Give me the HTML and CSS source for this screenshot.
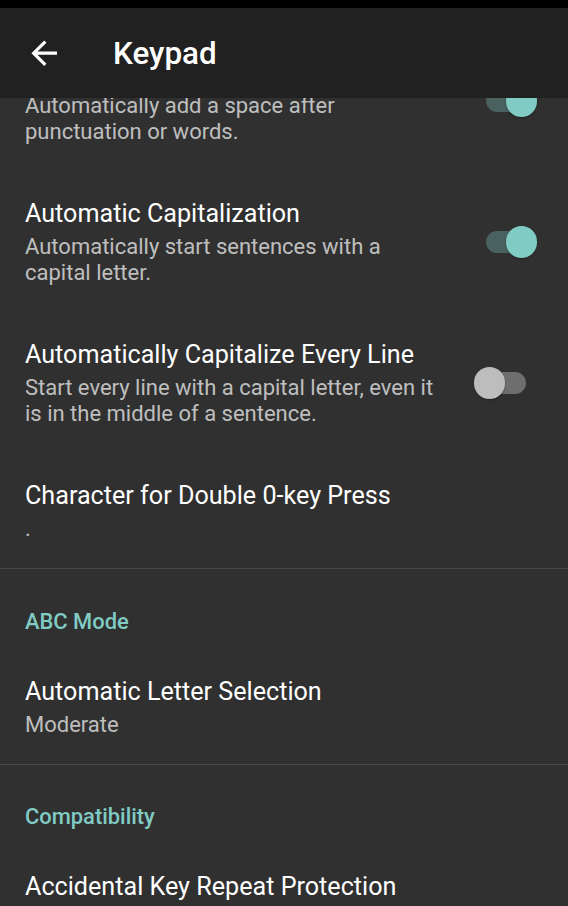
FILE: index.html
```html
<!DOCTYPE html>
<html lang="en">
<head>
  <meta charset="UTF-8">
  <meta name="viewport" content="width=device-width, initial-scale=1.0">
  <title>Keypad</title>
  <link rel="stylesheet" href="styles.css">
</head>
<body>
  <div class="statusbar"></div>

  <div class="appbar">
    <button class="back" aria-label="Back">
      <svg viewBox="0 0 24 24" width="38.4" height="38.4">
        <path fill="#fff" d="M20 11H7.83l5.59-5.59L12 4l-8 8 8 8 1.41-1.41L7.83 13H20v-2z"/>
      </svg>
    </button>
    <h1 class="appbar-title">Keypad</h1>
  </div>

  <div class="list">
    <!-- scrolled down a bit, first item is partly under the toolbar -->
    <div class="list-inner">
      <div class="pref">
        <div class="pref-text">
          <div class="pref-title">Automatic Space</div>
          <div class="pref-summary">Automatically add a space after<br>punctuation or words.</div>
        </div>
        <div class="switch on"><div class="track"></div><div class="thumb"></div></div>
      </div>

      <div class="pref">
        <div class="pref-text">
          <div class="pref-title">Automatic Capitalization</div>
          <div class="pref-summary">Automatically start sentences with a<br>capital letter.</div>
        </div>
        <div class="switch on"><div class="track"></div><div class="thumb"></div></div>
      </div>

      <div class="pref">
        <div class="pref-text">
          <div class="pref-title">Automatically Capitalize Every Line</div>
          <div class="pref-summary">Start every line with a capital letter, even it<br>is in the middle of a sentence.</div>
        </div>
        <div class="switch"><div class="track"></div><div class="thumb"></div></div>
      </div>

      <div class="pref">
        <div class="pref-text">
          <div class="pref-title">Character for Double 0-key Press</div>
          <div class="pref-summary">.</div>
        </div>
      </div>

      <div class="divider"></div>
      <div class="category">ABC Mode</div>

      <div class="pref">
        <div class="pref-text">
          <div class="pref-title">Automatic Letter Selection</div>
          <div class="pref-summary">Moderate</div>
        </div>
      </div>

      <div class="divider"></div>
      <div class="category">Compatibility</div>

      <div class="pref">
        <div class="pref-text">
          <div class="pref-title">Accidental Key Repeat Protection</div>
        </div>
      </div>
    </div>
  </div>
</body>
</html>
```

FILE: styles.css
```css
body {
  margin: 0;
  height: 906px;
  overflow: hidden;
  display: flex;
  flex-direction: column;
  background: #303030;
  font-family: Roboto, "Noto Sans", sans-serif;
  color: #fff;
}

.statusbar {
  height: 8px;
  flex-shrink: 0;
  background: #000;
}

.appbar {
  height: 89.6px;
  flex-shrink: 0;
  background: #212121;
  display: flex;
  align-items: center;
}

.back {
  background: none;
  border: none;
  padding: 0 0 0 24.6px;
  display: flex;
  cursor: pointer;
}

.appbar-title {
  margin: 0 0 0 50px;
  font-size: 31.4px;
  font-weight: 500;
  line-height: 37px;
  padding-top: 2px;
}

.list {
  flex: 1;
  overflow: hidden;
}

.list-inner {
  margin-top: -68.1px;
}

.pref {
  display: flex;
  align-items: center;
  padding: 28.6px 31px 26.4px 25px;
}

.pref-text {
  flex: 1;
  min-width: 0;
}

.pref-title {
  font-size: 25.15px;
  line-height: 30px;
  white-space: nowrap;
}

.pref-summary {
  margin-top: 5px;
  font-size: 22px;
  line-height: 25.5px;
  color: rgba(255, 255, 255, 0.7);
}

.switch {
  position: relative;
  width: 63px;
  height: 31.4px;
  margin-left: 24px;
  flex-shrink: 0;
}

.track {
  margin: 4.6px 11.5px 0;
  height: 22.2px;
  border-radius: 11.1px;
  background: rgba(255, 255, 255, 0.3);
}

.thumb {
  position: absolute;
  top: 0;
  left: 0;
  width: 31.4px;
  height: 31.4px;
  border-radius: 50%;
  background: #bdbdbd;
  box-shadow: 0 1px 2px rgba(0, 0, 0, 0.35);
}

.switch.on .track {
  background: rgba(128, 203, 196, 0.32);
}

.switch.on .thumb {
  left: auto;
  right: 0;
  background: #80cbc4;
}

.divider {
  height: 1px;
  background: #474747;
}

.category {
  padding: 39.6px 25px 13.4px;
  font-size: 21.9px;
  line-height: 26.25px;
  font-weight: 500;
  color: #80cbc4;
}
```
